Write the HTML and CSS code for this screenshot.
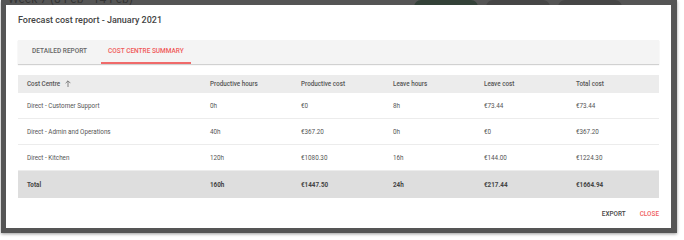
FILE: index.html
```html
<!DOCTYPE html>
<html lang="en">
  <head>
    <meta charset="UTF-8" />
    <meta name="viewport" content="width=device-width, initial-scale=1.0" />
    <title>Forecast cost report</title>
    <link rel="stylesheet" href="styles.css">
  </head>
  <body>
    <div class="page">
      <div class="page-top">
        <span class="week">Week 7 (8 Feb - 14 Feb)</span>
        <span class="pill green"></span>
        <span class="pill"></span>
        <span class="pill"></span>
      </div>
    </div>

    <div class="backdrop">
      <div class="dialog">
        <h2 class="title">Forecast cost report - January 2021</h2>

        <div class="tabs">
          <div class="tab">Detailed report</div>
          <div class="tab active">Cost centre summary</div>
        </div>

        <table class="report">
          <thead>
            <tr>
              <td>Cost Centre
                <svg class="sort" width="6" height="7" viewBox="0 0 6 7">
                  <path d="M3 7V1M0.6 3.2L3 0.8L5.4 3.2" fill="none" stroke="#666" stroke-width="0.8" />
                </svg>
              </td>
              <td>Productive hours</td>
              <td>Productive cost</td>
              <td>Leave hours</td>
              <td>Leave cost</td>
              <td>Total cost</td>
            </tr>
          </thead>
          <tbody>
            <tr>
              <td>Direct - Customer Support</td>
              <td>0h</td>
              <td>€0</td>
              <td>8h</td>
              <td>€73.44</td>
              <td>€73.44</td>
            </tr>
            <tr>
              <td>Direct - Admin and Operations</td>
              <td>40h</td>
              <td>€367.20</td>
              <td>0h</td>
              <td>€0</td>
              <td>€367.20</td>
            </tr>
            <tr>
              <td>Direct - Kitchen</td>
              <td>120h</td>
              <td>€1080.30</td>
              <td>16h</td>
              <td>€144.00</td>
              <td>€1224.30</td>
            </tr>
            <tr class="total">
              <td>Total</td>
              <td>160h</td>
              <td>€1447.50</td>
              <td>24h</td>
              <td>€217.44</td>
              <td>€1664.94</td>
            </tr>
          </tbody>
        </table>

        <div class="actions">
          <button class="btn">Export</button>
          <button class="btn close">Close</button>
        </div>
      </div>
    </div>
  </body>
</html>
```

FILE: styles.css
```css
body {
  margin: 0;
  background: #fff;
  font-family: Roboto, "Liberation Sans", sans-serif;
}
.page {
  height: 240px;
}
.page-top {
  display: flex;
  align-items: flex-start;
  gap: 8px;
  padding-left: 8px;
  height: 20px;
}
.week {
  font-size: 12px;
  line-height: 14px;
  color: #222;
  margin-top: -8px;
  width: 398px;
}
.pill {
  width: 64px;
  height: 14px;
  border-radius: 7px;
  background: #9a9a9a;
}
.pill.green {
  background: #1d7a3c;
}

/* modal */
.backdrop {
  position: absolute;
  left: 1px;
  top: 0;
  width: 676px;
  height: 233px;
  background: rgba(55, 55, 55, 0.85);
  box-shadow: 0 1px 3px rgba(0, 0, 0, 0.4);
}
.dialog {
  margin: 5px 0 0 5px;
  width: 665px;
  height: 223px;
  box-sizing: border-box;
  background: #fff;
  padding: 9px 12px 0 12px;
  display: flex;
  flex-direction: column;
}
.title {
  margin: 0;
  font-size: 9px;
  line-height: 12px;
  font-weight: 500;
  color: #444;
}
.tabs {
  margin-top: 14px;
  height: 24px;
  width: 641px;
  background: #f4f4f4;
  box-shadow: 0 1px 1px rgba(0, 0, 0, 0.18);
  display: flex;
  padding-left: 8px;
  box-sizing: border-box;
}
.tab {
  padding: 0 6px;
  margin-right: 8px;
  font-size: 6.5px;
  font-weight: 500;
  text-transform: uppercase;
  color: #666;
  line-height: 22px;
  border-bottom: 2px solid transparent;
}
.tab.active {
  padding: 0 7px;
  color: #f05a5a;
  border-bottom-color: #f06a6a;
}

.report {
  margin-top: 11px;
  width: 641px;
  border-collapse: collapse;
  table-layout: fixed;
  font-size: 6.3px;
  color: #555;
}
.report td {
  padding: 0 0 0 9px;
  height: 25px;
  border-bottom: 1px solid #ececec;
}
.report td:first-child {
  width: 174px;
}
.report td:nth-child(2) {
  width: 82px;
}
.report td:nth-child(3),
.report td:nth-child(5) {
  width: 83px;
}
.report td:nth-child(4) {
  width: 82px;
}
.report thead td {
  height: 18px;
  background: #ececec;
  font-weight: 500;
  color: #555;
  border-bottom: none;
}
.sort {
  margin-left: 3px;
  vertical-align: -1px;
}
.report tr.total td {
  height: 27px;
  background: #dedede;
  font-weight: 700;
  color: #444;
  border-bottom: none;
}

.actions {
  display: flex;
  justify-content: flex-end;
  gap: 14px;
  margin-top: 10px;
  padding-right: 0;
}
.btn {
  border: none;
  background: none;
  padding: 0;
  font-family: Roboto, "Liberation Sans", sans-serif;
  font-size: 6.4px;
  font-weight: 500;
  text-transform: uppercase;
  color: #444;
  line-height: 12px;
}
.btn.close {
  color: #f06060;
}
```
